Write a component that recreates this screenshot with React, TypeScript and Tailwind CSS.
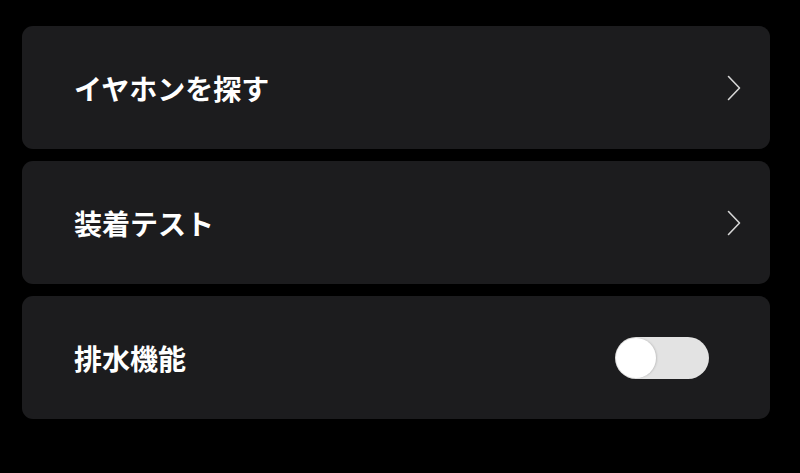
import React from "react";

function Chevron() {
  return (
    <svg width="14" height="26" viewBox="0 0 14 26" fill="none" className="shrink-0">
      <path d="M1.5 1.5 L12.5 13 L1.5 24.5" stroke="#d6d6d6" strokeWidth="1.6" strokeLinecap="round" strokeLinejoin="round" />
    </svg>
  );
}

function Row({ label, right }: { label: string; right: React.ReactNode }) {
  return (
    <div className="h-[123px] rounded-[11px] bg-[#1c1c1e] flex items-center justify-between pl-[52px]">
      <span
        className="text-white text-[28px] font-bold leading-none"
        style={{ fontFamily: '"Noto Sans CJK JP", "Noto Sans", sans-serif' }}
      >
        {label}
      </span>
      {right}
    </div>
  );
}

export default function App() {
  return (
    <div className="w-[800px] h-[473px] bg-black pt-[26px] pl-[22px] pr-[30px] flex flex-col gap-[12px]">
      <Row label="イヤホンを探す" right={<div className="pr-[29px]"><Chevron /></div>} />
      <Row label="装着テスト" right={<div className="pr-[29px]"><Chevron /></div>} />
      <Row
        label="排水機能"
        right={
          <div className="pr-[61px]">
            <div className="w-[94px] h-[42px] rounded-full bg-[#e3e3e3] p-[1px] flex items-center">
              <div className="w-[40px] h-[40px] rounded-full bg-white shadow-[1px_0_2px_rgba(0,0,0,0.15)]" />
            </div>
          </div>
        }
      />
    </div>
  );
}
